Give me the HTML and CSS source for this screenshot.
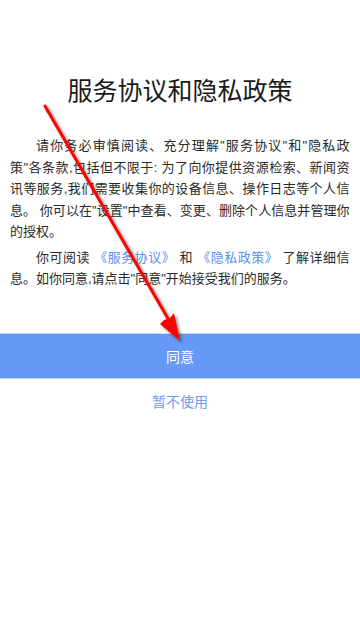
FILE: index.html
```html
<!DOCTYPE html>
<html lang="zh-CN">
<head>
<meta charset="utf-8">
<link rel="stylesheet" href="styles.css">
</head>
<body>
<div class="page">
  <h1 class="title">服务协议和隐私政策</h1>
  <div class="content">
    <p class="para">请你务必审慎阅读、充分理解"服务协议"和"隐私政策"各条款,包括但不限于: 为了向你提供资源检索、新闻资讯等服务,我们需要收集你的设备信息、操作日志等个人信息。 你可以在"设置"中查看、变更、删除个人信息并管理你的授权。</p>
    <p class="para">你可阅读 <span class="link">《服务协议》</span> 和 <span class="link">《隐私政策》</span> 了解详细信息。如你同意,请点击"同意"开始接受我们的服务。</p>
  </div>
  <div class="agree">同意</div>
  <div class="decline">暂不使用</div>
  <svg class="arrow" width="360" height="620" viewBox="0 0 360 620">
    <defs>
      <filter id="sh" x="-20%" y="-20%" width="140%" height="140%">
        <feGaussianBlur in="SourceAlpha" stdDeviation="1.5"/>
        <feOffset dx="2" dy="2" result="b"/>
        <feComponentTransfer><feFuncA type="linear" slope="0.5"/></feComponentTransfer>
        <feMerge><feMergeNode/><feMergeNode in="SourceGraphic"/></feMerge>
      </filter>
    </defs>
    <g filter="url(#sh)">
      <line x1="45" y1="106" x2="170" y2="322" stroke="#f00" stroke-width="3" stroke-linecap="round"/>
      <polygon points="180,341 160,324 164,320 170,318 174,313" fill="#f00"/>
    </g>
  </svg>
</div>
</body>
</html>
```

FILE: styles.css
```css
html, body {
  margin: 0;
  padding: 0;
  background: #fff;
}
body {
  font-family: "Liberation Sans", "Noto Sans CJK SC", sans-serif;
  color: #222;
}
.page {
  position: relative;
  width: 360px;
  height: 620px;
  overflow: hidden;
}
.title {
  margin: 0;
  padding-top: 72px;
  font-family: "Noto Sans CJK SC", sans-serif;
  font-size: 25px;
  line-height: 34px;
  font-weight: 400;
  text-align: center;
  color: #1a1a1a;
}
.content {
  padding: 29px 10.5px 0 10px;
}
.para {
  margin: 0 0 4px 0;
  font-size: 13px;
  line-height: 21.5px;
  text-indent: 2em;
  text-align: justify;
  color: #2a2a2a;
}
.link {
  color: #5b8ff0;
}
.agree {
  margin-top: 43.5px;
  height: 44px;
  border-top: 1px solid #c5d8fb;
  border-bottom: 1px solid #c5d8fb;
  background: #6699f5;
  color: #fff;
  font-family: "Noto Sans CJK SC", sans-serif;
  font-size: 14px;
  line-height: 44px;
  text-align: center;
}
.decline {
  margin-top: 12px;
  font-family: "Noto Sans CJK SC", sans-serif;
  font-size: 14px;
  line-height: 20px;
  text-align: center;
  color: #6c9bf2;
}
.arrow {
  position: absolute;
  left: 0;
  top: 0;
  pointer-events: none;
}
```
